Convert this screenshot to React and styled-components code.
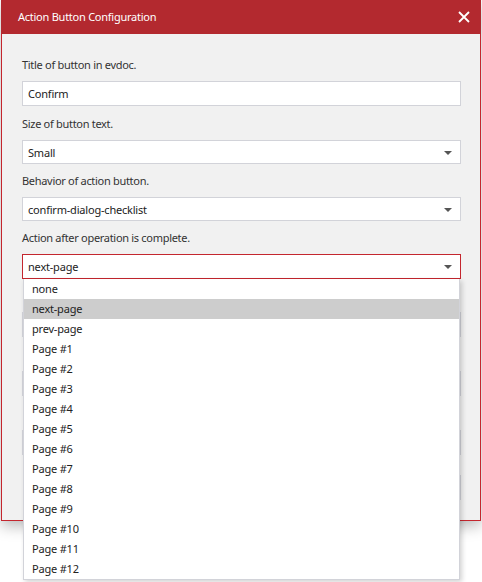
import React from 'react'
import styled, { createGlobalStyle } from 'styled-components'

const GlobalStyle = createGlobalStyle`
  html, body {
    margin: 0;
    padding: 0;
    background: #ffffff;
    font-family: "Noto Sans", "Open Sans", sans-serif;
  }
`

const pages = Array.from({ length: 12 }, (_, i) => `Page #${i + 1}`)
const actions = ['none', 'next-page', 'prev-page', ...pages]

const Page = styled.div`
  padding-left: 1px;
  width: 482px;
  height: 582px;
  box-sizing: border-box;
`

const Dialog = styled.div`
  position: relative;
  width: 480px;
  box-sizing: border-box;
  border: 1px solid #c4262e;
  border-top: none;
  background: #f1f1f1;
  box-shadow: 0 5px 14px rgba(0, 0, 0, 0.28);
`

const Header = styled.div`
  display: flex;
  align-items: center;
  justify-content: space-between;
  height: 34px;
  margin: 0 -1px;
  padding: 0 10px 0 17px;
  background: #b3292f;
  color: #ffffff;
  font-size: 11px;
  letter-spacing: -0.25px;
`

const Title = styled.span`
  line-height: 34px;
`

const Close = styled.button`
  display: flex;
  align-items: center;
  justify-content: center;
  width: 14px;
  height: 14px;
  padding: 0;
  border: none;
  background: none;
  cursor: pointer;
`

const Body = styled.div`
  padding: 22px 19px 20px 20px;
`

const Group = styled.div`
  position: relative;
  margin-bottom: ${(p) => p.gap ?? 8}px;
`

const Label = styled.div`
  height: 17px;
  font-size: 11px;
  line-height: 17px;
  color: #333333;
  margin-bottom: 8px;
  letter-spacing: -0.3px;
`

const Field = styled.div`
  position: relative;
  display: flex;
  align-items: center;
  justify-content: space-between;
  height: ${(p) => p.h || 24}px;
  box-sizing: border-box;
  padding: 0 8px 0 5px;
  background: #ffffff;
  border: 1px solid ${(p) => (p.active ? '#c4262e' : '#d2d3d9')};
  font-size: 11px;
  color: #222222;
  letter-spacing: -0.2px;
`

const Arrow = styled.span`
  width: 0;
  height: 0;
  border-left: 4px solid transparent;
  border-right: 4px solid transparent;
  border-top: 4px solid #555555;
  margin-top: 1px;
`

const Footer = styled.div`
  display: flex;
  justify-content: flex-end;
  padding-top: 20px;
`

const Button = styled.div`
  width: 90px;
  height: 25px;
  box-sizing: border-box;
  border: 1px solid #d2d3d9;
  background: #ffffff;
`

const Menu = styled.ul`
  position: absolute;
  top: calc(100% + 1px);
  left: 0;
  right: 0;
  margin: 0;
  padding: 0;
  list-style: none;
  background: #ffffff;
  border: 1px solid #d2d3d9;
  border-top: none;
  box-shadow: 2px 2px 5px rgba(0, 0, 0, 0.18);
  z-index: 10;
`

const Item = styled.li`
  height: 20px;
  line-height: 20px;
  padding-left: 8px;
  font-size: 11px;
  color: #222222;
  letter-spacing: -0.2px;
  background: ${(p) => (p.selected ? '#cdcdcd' : 'transparent')};
`

const Select = ({ value, active, h, children }) => (
  <Field active={active} h={h}>
    <span>{value}</span>
    <Arrow />
    {children}
  </Field>
)

export default function App() {
  return (
    <Page>
      <GlobalStyle />
      <Dialog>
        <Header>
          <Title>Action Button Configuration</Title>
          <Close aria-label="close">
            <svg width="12" height="12" viewBox="0 0 12 12">
              <path d="M1 1 L11 11 M11 1 L1 11" stroke="#ffffff" strokeWidth="1.8" />
            </svg>
          </Close>
        </Header>
        <Body>
          <Group gap={9}>
            <Label>Title of button in evdoc.</Label>
            <Field h={25}>Confirm</Field>
          </Group>
          <Group>
            <Label>Size of button text.</Label>
            <Select value="Small" />
          </Group>
          <Group>
            <Label>Behavior of action button.</Label>
            <Select value="confirm-dialog-checklist" />
          </Group>
          <Group>
            <Label>Action after operation is complete.</Label>
            <Select value="next-page" h={25} active>
              <Menu>
                {actions.map((a) => (
                  <Item key={a} selected={a === 'next-page'}>{a}</Item>
                ))}
              </Menu>
            </Select>
          </Group>
          {/* fields covered by the open menu */}
          <Group gap={9}>
            <Label />
            <Field h={25} />
          </Group>
          <Group gap={9}>
            <Label />
            <Field h={25} />
          </Group>
          <Group gap={0}>
            <Label />
            <Field h={25} />
          </Group>
          <Footer>
            <Button />
          </Footer>
        </Body>
      </Dialog>
    </Page>
  )
}
